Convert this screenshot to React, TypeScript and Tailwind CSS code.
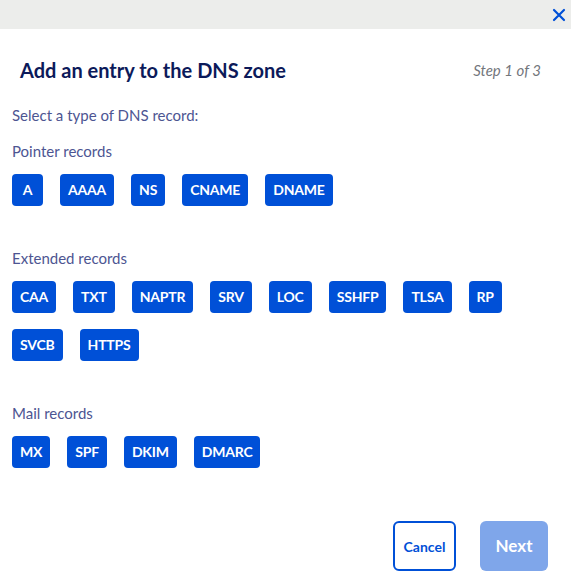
import { useState } from "react";

const sections = [
	{ title: "Pointer records", types: ["A", "AAAA", "NS", "CNAME", "DNAME"] },
	{
		title: "Extended records",
		types: ["CAA", "TXT", "NAPTR", "SRV", "LOC", "SSHFP", "TLSA", "RP", "SVCB", "HTTPS"],
	},
	{ title: "Mail records", types: ["MX", "SPF", "DKIM", "DMARC"] },
];

function RecordButton({ label, selected, onClick }: { label: string; selected: boolean; onClick: () => void }) {
	return (
		<button
			onClick={onClick}
			className={`h-8 min-w-[31px] px-2 rounded-[4px] text-[14px] tracking-[-0.2px] font-bold text-white leading-none ${
				selected ? "bg-[#000e9c]" : "bg-[#0050d7]"
			}`}
		>
			{label}
		</button>
	);
}

export default function App() {
	const [selected, setSelected] = useState<string | null>(null);

	return (
		<div className="w-[571px] h-[582px] bg-white flex flex-col font-['Lato',sans-serif]">
			<div className="h-[29px] bg-[#ecedeb] flex items-center justify-end pr-[4px]">
				<button className="w-4 h-4 flex items-center justify-center text-[#0050d7]">
					<svg width="14" height="14" viewBox="0 0 14 14" fill="none" stroke="currentColor" strokeWidth="2.2" strokeLinecap="round">
						<path d="M2 2 L12 12 M12 2 L2 12" />
					</svg>
				</button>
			</div>

			<div className="flex items-center justify-between pl-5 pr-[30px] mt-[27px]">
				<h2 className="text-[20px] leading-7 font-bold text-[#0c1a5a]">Add an entry to the DNS zone</h2>
				<span className="text-[15px] italic text-[#73767c]">Step 1 of 3</span>
			</div>

			<div className="px-3 mt-[21px] text-[15px] leading-5 text-[#4d5592]">Select a type of DNS record:</div>

			<div className="px-3 flex flex-col">
				{sections.map((s, i) => (
					<div key={s.title} className={i === 0 ? "mt-4" : "mt-[42px]"}>
						<div className="text-[15px] leading-5 text-[#4d5592]">{s.title}</div>
						<div className="mt-[13px] flex flex-wrap gap-x-[17px] gap-y-4">
							{s.types.map((t) => (
								<RecordButton key={t} label={t} selected={selected === t} onClick={() => setSelected(t)} />
							))}
						</div>
					</div>
				))}
			</div>

			<div className="mt-[53px] flex justify-end gap-6 pr-[23px]">
				<button className="h-[50px] w-[63px] rounded-[6px] border-2 border-[#0050d7] text-[#0050d7] text-[14px] font-bold">
					Cancel
				</button>
				<button
					disabled={!selected}
					className="h-[50px] w-[68px] rounded-[6px] bg-[#7fa6ea] text-white text-[17px] font-bold"
				>
					Next
				</button>
			</div>
		</div>
	);
}
